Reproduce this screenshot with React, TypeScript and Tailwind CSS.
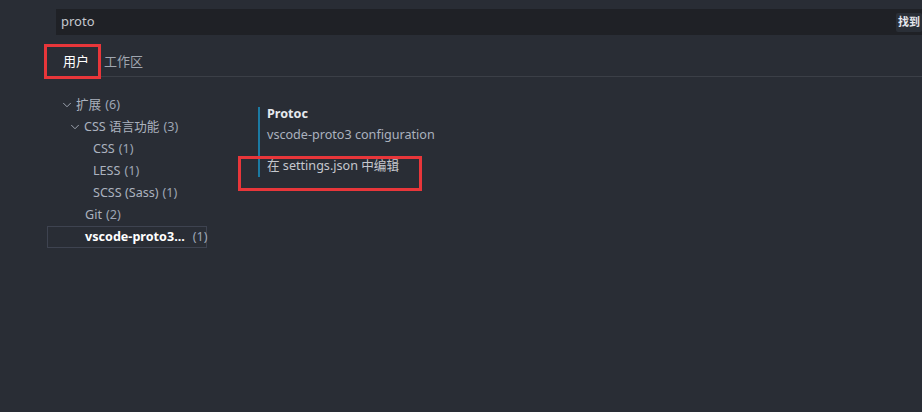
import React from "react";
import { ChevronDown } from "lucide-react";

const font = {
  fontFamily: '"Segoe UI", "Noto Sans", "Noto Sans CJK SC", sans-serif',
};

type Row = {
  label: string;
  count: string;
  indent: string;
  chevron?: boolean;
  selected?: boolean;
};

const rows: Row[] = [
  { label: "扩展", count: "(6)", indent: "pl-[12px]", chevron: true },
  { label: "CSS 语言功能", count: "(3)", indent: "pl-[20px]", chevron: true },
  { label: "CSS", count: "(1)", indent: "pl-[45px]" },
  { label: "LESS", count: "(1)", indent: "pl-[45px]" },
  { label: "SCSS (Sass)", count: "(1)", indent: "pl-[45px]" },
  { label: "Git", count: "(2)", indent: "pl-[37px]" },
  { label: "vscode-proto3...", count: "(1)", indent: "pl-[37px]", selected: true },
];

const TreeRow = ({ row }: { row: Row }) => {
  return (
    <div
      className={
        "flex h-[22px] items-center text-[12.6px] " +
        row.indent +
        (row.selected
          ? " border border-[#3e4350] text-white font-bold"
          : " border border-transparent text-[#abb2bf]")
      }
    >
      {row.chevron && (
        <ChevronDown size={14} strokeWidth={1.5} className="mr-[2px] text-[#abb2bf]" />
      )}
      <span className="whitespace-nowrap">{row.label}</span>
      <span
        className={
          "font-normal text-[#9da5b4] whitespace-nowrap " +
          (row.selected ? "ml-[8px]" : "ml-1")
        }
      >
        {row.count}
      </span>
    </div>
  );
};

const App = () => {
  return (
    <div className="h-[412px] w-[922px] overflow-hidden bg-[#292d35]" style={font}>
      {/* search */}
      <div className="pl-[56px] pt-[9px]">
        <div className="flex h-[26px] items-center justify-between bg-[#1f2126] pl-[5px]">
          <span className="text-[13px] text-[#c5c8ce]">proto</span>
          <span className="flex h-[19px] items-center rounded-[2px] bg-[#2a2f37] px-[2px] text-[11px] font-bold text-[#e6e9ee]">
            找到
          </span>
        </div>
      </div>

      {/* tabs */}
      <div className="ml-[56px] mt-[12px] flex h-[30px] items-stretch border-b border-[#3b3f47]">
        <div className="relative flex items-center px-[7px] text-[13px] text-white">
          用户
          <div className="absolute bottom-[-1px] left-0 right-0 h-[1px] bg-white"></div>
          <div className="absolute left-[-12px] top-[-3px] h-[35px] w-[57px] border-[3px] border-[#e8363a]"></div>
        </div>
        <div className="flex items-center pl-[8px] text-[13px] text-[#a0a6b0]">工作区</div>
      </div>

      <div className="mt-[17px] flex items-start">
        {/* tree */}
        <div className="ml-[47px] w-[160px]">
          {rows.map((r) => (
            <TreeRow key={r.label} row={r} />
          ))}
        </div>

        {/* setting */}
        <div className="relative ml-[51px] mt-[13px] h-[70px] border-l-2 border-[#1b7aa3] pl-[7px] text-[12.6px]">
          <div className="mt-[-2px] font-bold leading-[18px] text-[#e6e9ee]">Protoc</div>
          <div className="mt-[3px] leading-[18px] text-[#abb2bf]">
            vscode-proto3 configuration
          </div>
          <div className="mt-[13px] leading-[18px] text-[#c5c8ce]">
            在 settings.json 中编辑
          </div>
          <div className="absolute left-[-22px] top-[49px] h-[35px] w-[184px] border-[3px] border-[#e8363a]"></div>
        </div>
      </div>
    </div>
  );
};

export default App;
